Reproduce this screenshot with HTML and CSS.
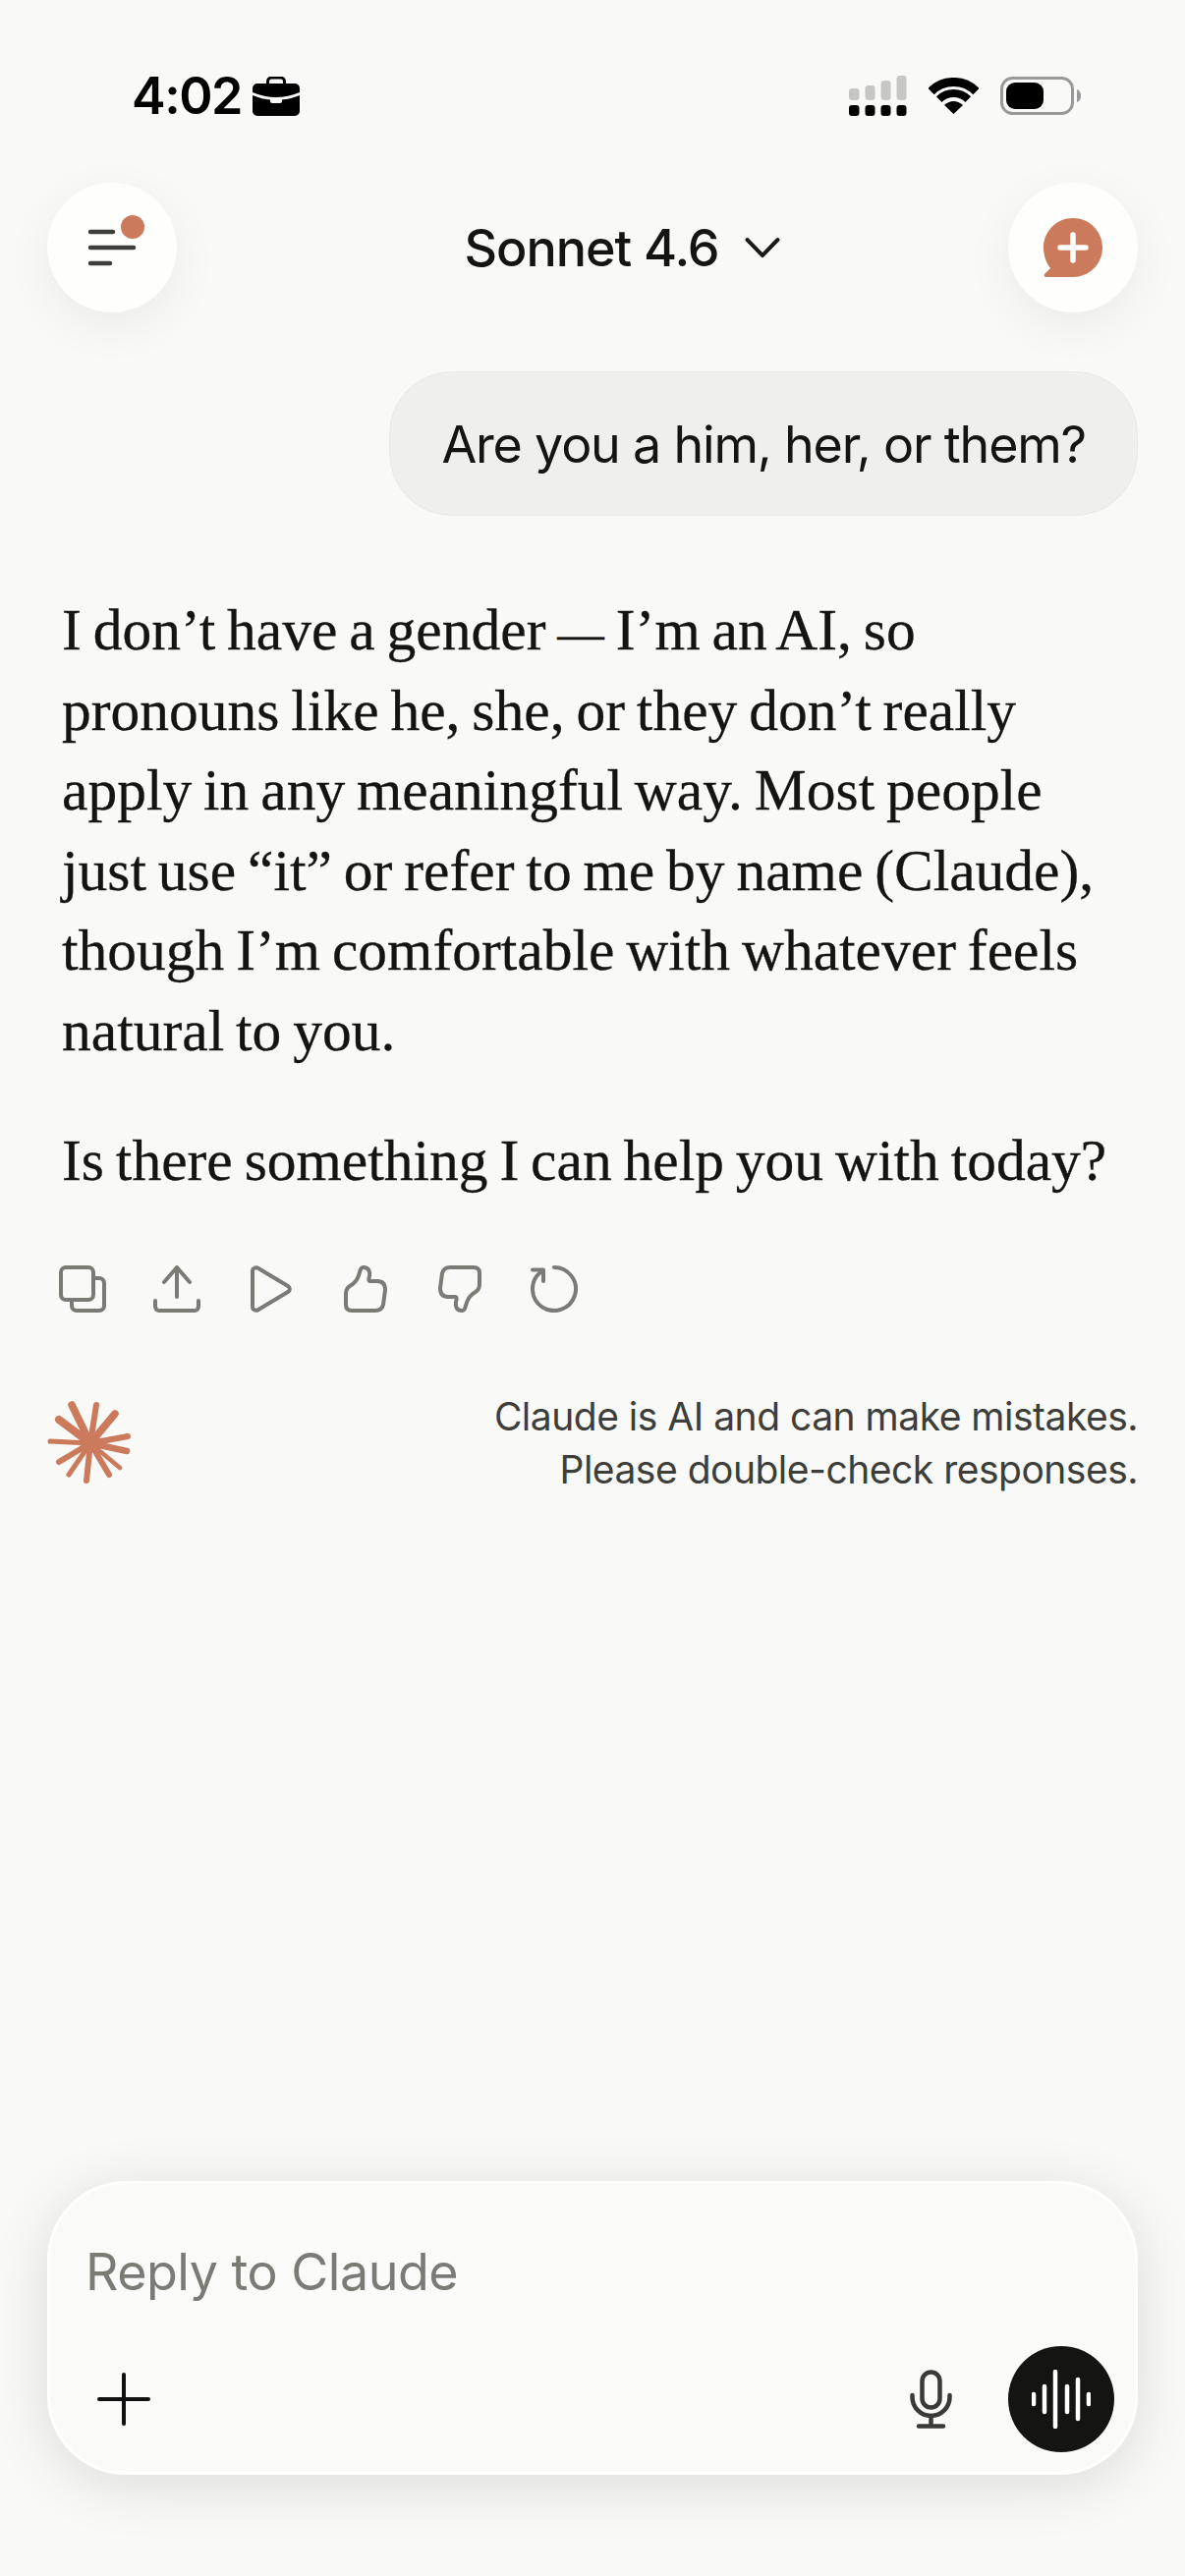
FILE: index.html
```html
<!DOCTYPE html>
<html lang="en">
<head>
  <meta charset="UTF-8" />
  <title>Claude</title>
  <link rel="stylesheet" href="styles.css">
</head>
<body>
  <div class="app">
    <!-- Status bar -->
    <div class="status-bar">
      <div class="status-left">
        <span class="time">4:02</span>
        <svg class="briefcase" width="48" height="40" viewBox="0 0 48 40">
          <path d="M15.5 8V5a4 4 0 0 1 4-4h9a4 4 0 0 1 4 4v3" fill="none" stroke="#000" stroke-width="3"/>
          <path d="M5 7H43a5 5 0 0 1 5 5V16Q24 26 0 16V12a5 5 0 0 1 5-5Z"/>
          <path d="M0 19Q10 23 18 23.6V25a2 2 0 0 0 2 2h8a2 2 0 0 0 2-2V23.6Q38 23 48 19V35a5 5 0 0 1-5 5H5a5 5 0 0 1-5-5Z"/>
        </svg>
      </div>
      <div class="status-right">
        <svg width="59" height="41" viewBox="0 0 59 41">
          <g fill="#c6c6c3">
            <rect x="0" y="13" width="10.5" height="12" rx="3"/>
            <rect x="16.5" y="10" width="10" height="15" rx="3"/>
            <rect x="32.5" y="5" width="10" height="20" rx="3"/>
            <rect x="48.5" y="0" width="10" height="25" rx="3"/>
          </g>
          <rect x="0" y="30" width="10.5" height="11" rx="3"/>
          <rect x="16.5" y="30" width="10" height="11" rx="3"/>
          <rect x="32.5" y="30" width="10" height="11" rx="3"/>
          <rect x="48.5" y="30" width="10" height="11" rx="3"/>
        </svg>
        <svg width="51" height="37" viewBox="0 0 51 37">
          <path d="M2.5 14A32.5 32.5 0 0 1 48.5 14" fill="none" stroke="#000" stroke-width="9"/>
          <path d="M10.7 22.2A21 21 0 0 1 40.3 22.2" fill="none" stroke="#000" stroke-width="8"/>
          <path d="M25.5 37L16 28Q25.5 20 35 28Z"/>
        </svg>
        <svg width="82" height="39" viewBox="0 0 82 39">
          <rect x="1.5" y="1.5" width="72" height="36" rx="11" fill="none" stroke="#999" stroke-width="3"/>
          <rect x="6" y="6" width="38" height="27" rx="9"/>
          <path d="M78 13c3 1 4 3.500 4 6.500s-1 5.500-4 6.500Z" fill="#999"/>
        </svg>
      </div>
    </div>

    <!-- Header -->
    <div class="top-nav">
      <button class="round-btn">
        <svg width="132" height="132" viewBox="0 0 132 132">
          <g stroke="#3d3d3a" stroke-width="4.500" stroke-linecap="round">
            <path d="M44 50H67"/>
            <path d="M44 66H88"/>
            <path d="M44 82H64"/>
          </g>
          <circle cx="87" cy="45" r="12" fill="#cb7a5c"/>
        </svg>
      </button>
      <div class="model-picker">
        <span>Sonnet 4.6</span>
        <svg width="36" height="22" viewBox="0 0 36 22">
          <path d="M2.500 3L18 19L33.500 3" fill="none" stroke="#1a1a18" stroke-width="4" stroke-linecap="round" stroke-linejoin="round"/>
        </svg>
      </div>
      <button class="round-btn">
        <svg width="60" height="60" viewBox="0 0 60 60">
          <path d="M30 0C46.600 0 60 13.400 60 30S46.600 60 30 60H3C.5 60 0 58 1.500 56.500L7 51C2.500 45.500 0 38 0 30 0 13.400 13.400 0 30 0Z" fill="#cb7a5c"/>
          <path d="M30 17V43M17 30H43" stroke="#fff" stroke-width="5.500" stroke-linecap="round"/>
        </svg>
      </button>
    </div>

    <!-- Conversation -->
    <div class="user-msg">Are you a him, her, or them?</div>

    <div class="reply">
      <p>I don’t have a gender <span class="dash">—</span> I’m an AI, so<br>pronouns like he, she, or they don’t really<br>apply in any meaningful way. Most people<br>just use “it” or refer to me by name (Claude),<br>though I’m comfortable with whatever feels<br>natural to you.</p>
      <p>Is there something I can help you with today?</p>
    </div>

    <div class="actions">
      <svg width="48" height="48" viewBox="0 0 48 48">
        <rect x="2" y="2" width="33" height="33" rx="5"/>
        <path d="M36 13h5a5 5 0 0 1 5 5v23a5 5 0 0 1-5 5H18a5 5 0 0 1-5-5v-6"/>
      </svg>
      <svg width="48" height="48" viewBox="0 0 48 48">
        <path d="M24 32V3M11 17L24 2L37 17"/>
        <path d="M2 36v6a4 4 0 0 0 4 4h36a4 4 0 0 0 4-4v-6"/>
      </svg>
      <svg width="48" height="48" viewBox="0 0 48 48">
        <path d="M5 6C5 3 8 1 11 3L41 21C43.500 22.500 43.500 25.500 41 27L11 45C8 47 5 45 5 42Z"/>
      </svg>
      <svg width="48" height="48" viewBox="0 0 48 48">
        <path d="M10 46H34C38 46 41 44 42 40L44 25C44 19 41 16 36 16H29C27 16 27 14 28 11C29 6 27 2 22 2C19 2 19 4 18 7C17 11 15 16 11 19C6 22 4 24 4 29V40C4 44 6 46 10 46Z"/>
      </svg>
      <svg width="48" height="48" viewBox="0 0 48 48">
        <path transform="rotate(180 24 24)" d="M10 46H34C38 46 41 44 42 40L44 25C44 19 41 16 36 16H29C27 16 27 14 28 11C29 6 27 2 22 2C19 2 19 4 18 7C17 11 15 16 11 19C6 22 4 24 4 29V40C4 44 6 46 10 46Z"/>
      </svg>
      <svg width="48" height="48" viewBox="0 0 48 48">
        <path d="M24 2A22 22 0 1 1 10 7"/>
        <path d="M2 4.500H13V16"/>
      </svg>
    </div>

    <div class="notice">
      <svg class="spark" width="86" height="84" viewBox="0 0 86 84">
        <g stroke="#cb7a5c" stroke-linecap="round">
          <path d="M44 43L25 4" stroke-width="7.500"/>
          <path d="M44 43L50 4" stroke-width="6"/>
          <path d="M44 43L69 13" stroke-width="7.500"/>
          <path d="M44 43L82 36" stroke-width="6"/>
          <path d="M44 43L81 51" stroke-width="6.500"/>
          <path d="M44 43L74 68" stroke-width="4.500"/>
          <path d="M44 43L63 75" stroke-width="6"/>
          <path d="M44 43L40 81" stroke-width="6"/>
          <path d="M44 43L22 75" stroke-width="5"/>
          <path d="M44 43L12 62" stroke-width="6"/>
          <path d="M44 43L3 41" stroke-width="5"/>
          <path d="M44 43L12 19" stroke-width="8"/>
        </g>
        <circle cx="44" cy="43" r="10" fill="#cb7a5c"/>
      </svg>
      <div class="notice-text">Claude is AI and can make mistakes.<br>Please double-check responses.</div>
    </div>

    <div class="spacer"></div>

    <!-- Composer -->
    <div class="composer">
      <div class="placeholder">Reply to Claude</div>
      <div class="composer-row">
        <svg class="plus" width="54" height="54" viewBox="0 0 54 54">
          <path d="M27 2V52M2 27H52" stroke="#111" stroke-width="4" stroke-linecap="round"/>
        </svg>
        <svg class="mic" width="43" height="60" viewBox="0 0 43 60">
          <g fill="none" stroke="#3a3a37" stroke-width="4.500" stroke-linecap="round">
            <rect x="12.500" y="2.500" width="18" height="36" rx="9"/>
            <path d="M2.500 26v2a19 19 0 0 0 38 0v-2"/>
            <path d="M21.500 47V57.500M9 57.500H34"/>
          </g>
        </svg>
        <button class="voice-btn">
          <svg width="60" height="60" viewBox="0 0 60 60">
            <path d="M3 25V35M14 17V43M25 2V58M37 17V43M48 10V50M59 25V35" transform="translate(-1 0)" stroke="#fff" stroke-width="4.500" stroke-linecap="round"/>
          </svg>
        </button>
      </div>
    </div>
  </div>
</body>
</html>
```

FILE: styles.css
```css
html, body {
  margin: 0;
  padding: 0;
}
body {
  background: #f9f9f7;
  color: #141413;
  font-family: Inter, "Noto Sans", sans-serif;
}
svg {
  display: block;
}
button {
  border: none;
  padding: 0;
  background: none;
  appearance: none;
}
.app {
  width: 1206px;
  height: 2622px;
  display: flex;
  flex-direction: column;
  overflow: hidden;
}

/* status bar */
.status-bar {
  display: flex;
  justify-content: space-between;
  align-items: center;
  height: 41px;
  margin-top: 77px;
  padding: 0 106px 0 134px;
}
.status-left {
  display: flex;
  align-items: center;
  gap: 11px;
}
.time {
  color: #000;
  font-size: 52px;
  font-weight: 600;
  letter-spacing: -1.5px;
  line-height: 41px;
}
.status-right {
  display: flex;
  align-items: center;
  gap: 22px;
}

/* header */
.top-nav {
  display: flex;
  justify-content: space-between;
  align-items: center;
  margin-top: 68px;
  padding: 0 48px;
}
.round-btn {
  width: 132px;
  height: 132px;
  border-radius: 50%;
  background: #fefefd;
  box-shadow: 0 14px 50px rgba(0, 0, 0, 0.06);
  display: flex;
  align-items: center;
  justify-content: center;
}
.model-picker {
  display: flex;
  align-items: center;
  gap: 26px;
  margin-left: 60px;
  font-size: 52px;
  font-weight: 500;
  letter-spacing: -1px;
  color: #141413;
}

/* messages */
.user-msg {
  align-self: flex-end;
  height: 147px;
  margin: 60px 48px 0 0;
  padding: 2px 52px 0;
  box-sizing: border-box;
  display: flex;
  align-items: center;
  background: #efefeb;
  border: 1px solid #e9e9e5;
  border-radius: 64px;
  font-size: 52px;
  letter-spacing: -1.2px;
  color: #141413;
}
.reply {
  margin: 76px 0 0 63px;
  font-family: "Liberation Serif", serif;
  font-size: 59.5px;
  word-spacing: -3px;
  line-height: 81.6px;
  color: #141413;
  white-space: nowrap;
  -webkit-text-stroke: 0.3px #141413;
}
.reply p {
  margin: 0 0 50px;
}
.reply p:last-child {
  margin-bottom: 0;
}
.dash {
  font-size: 0.8em;
  line-height: 0;
}
.actions {
  display: flex;
  gap: 48px;
  margin: 66px 0 0 60px;
}
.actions svg {
  fill: none;
  stroke: #7b7b76;
  stroke-width: 4;
  stroke-linecap: round;
  stroke-linejoin: round;
}
.notice {
  display: flex;
  justify-content: space-between;
  align-items: flex-start;
  margin-top: 79px;
  padding: 0 48px;
}
.spark {
  margin-top: 11px;
}
.notice-text {
  text-align: right;
  font-size: 39px;
  letter-spacing: -0.5px;
  line-height: 54px;
  color: #3d3d3a;
}
.spacer {
  flex: 1;
}

/* composer */
.composer {
  margin: 0 48px 103px;
  height: 299px;
  box-sizing: border-box;
  padding: 60px 21px 0 36px;
  background: #fafaf8;
  border: 3px solid #fff;
  border-radius: 80px;
  box-shadow: 0 10px 60px rgba(0, 0, 0, 0.12);
}
.placeholder {
  height: 60px;
  line-height: 60px;
  font-size: 52px;
  letter-spacing: -0.5px;
  color: #7b7b76;
}
.composer-row {
  display: flex;
  align-items: center;
  margin-top: 45px;
}
.plus {
  margin-left: 12px;
  margin-right: auto;
}
.mic {
  margin-right: 57px;
}
.voice-btn {
  width: 108px;
  height: 108px;
  border-radius: 50%;
  background: #141413;
  display: flex;
  align-items: center;
  justify-content: center;
}
```
